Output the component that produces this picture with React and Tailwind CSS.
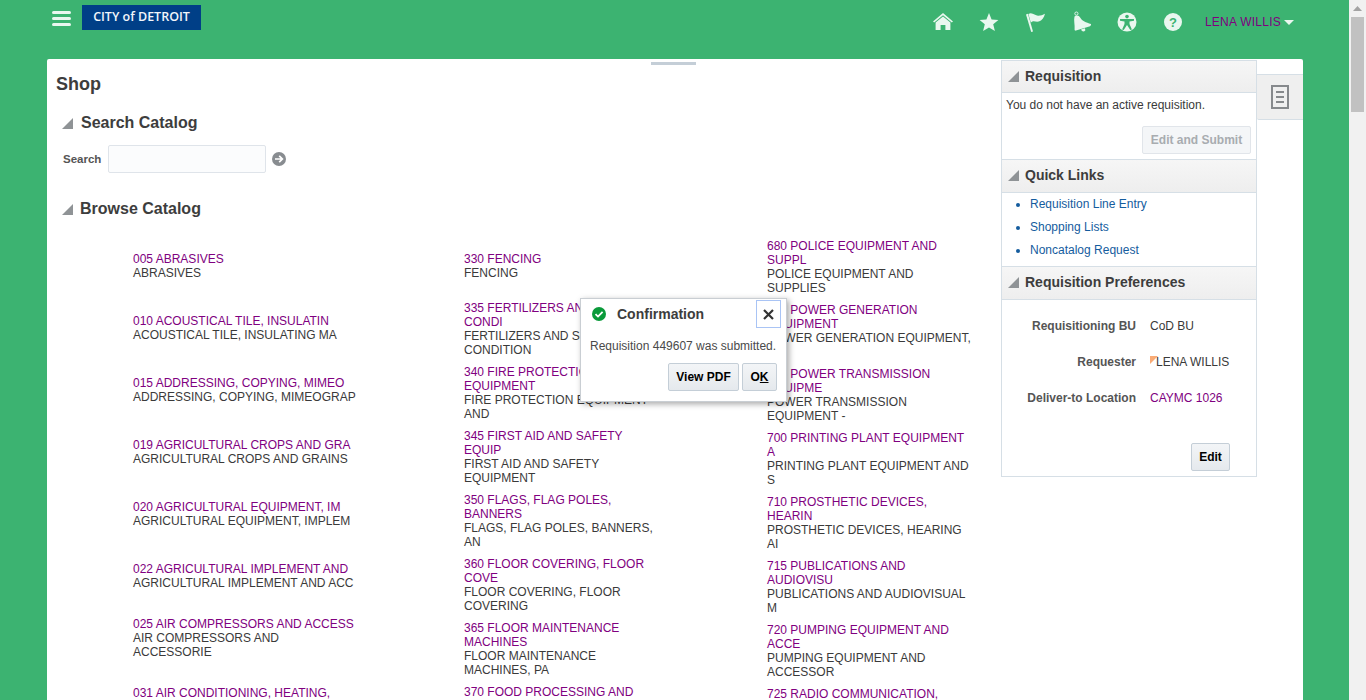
import React from "react";

const col1 = [
  ["005 ABRASIVES", "ABRASIVES"],
  ["010 ACOUSTICAL TILE, INSULATIN", "ACOUSTICAL TILE, INSULATING MA"],
  ["015 ADDRESSING, COPYING, MIMEO", "ADDRESSING, COPYING, MIMEOGRAP"],
  ["019 AGRICULTURAL CROPS AND GRA", "AGRICULTURAL CROPS AND GRAINS"],
  ["020 AGRICULTURAL EQUIPMENT, IM", "AGRICULTURAL EQUIPMENT, IMPLEM"],
  ["022 AGRICULTURAL IMPLEMENT AND", "AGRICULTURAL IMPLEMENT AND ACC"],
  ["025 AIR COMPRESSORS AND ACCESS", "AIR COMPRESSORS AND ACCESSORIE"],
  ["031 AIR CONDITIONING, HEATING,", "AIR CONDITIONING, HEATING"],
];

const col2 = [
  ["330 FENCING", "FENCING"],
  ["335 FERTILIZERS AND SOIL CONDI", "FERTILIZERS AND SOIL CONDITION"],
  ["340 FIRE PROTECTION EQUIPMENT", "FIRE PROTECTION EQUIPMENT AND"],
  ["345 FIRST AID AND SAFETY EQUIP", "FIRST AID AND SAFETY EQUIPMENT"],
  ["350 FLAGS, FLAG POLES, BANNERS", "FLAGS, FLAG POLES, BANNERS, AN"],
  ["360 FLOOR COVERING, FLOOR COVE", "FLOOR COVERING, FLOOR COVERING"],
  ["365 FLOOR MAINTENANCE MACHINES", "FLOOR MAINTENANCE MACHINES, PA"],
  ["370 FOOD PROCESSING AND PREPAR", "FOOD PROCESSING AND PREPARATION"],
];

const col3 = [
  ["680 POLICE EQUIPMENT AND SUPPL", "POLICE EQUIPMENT AND SUPPLIES"],
  ["690 POWER GENERATION EQUIPMENT", "POWER GENERATION EQUIPMENT, A"],
  ["695 POWER TRANSMISSION EQUIPME", "POWER TRANSMISSION EQUIPMENT -"],
  ["700 PRINTING PLANT EQUIPMENT A", "PRINTING PLANT EQUIPMENT AND S"],
  ["710 PROSTHETIC DEVICES, HEARIN", "PROSTHETIC DEVICES, HEARING AI"],
  ["715 PUBLICATIONS AND AUDIOVISU", "PUBLICATIONS AND AUDIOVISUAL M"],
  ["720 PUMPING EQUIPMENT AND ACCE", "PUMPING EQUIPMENT AND ACCESSOR"],
  ["725 RADIO COMMUNICATION, TELEC", "RADIO COMMUNICATION, TELEPHONE"],
];

function Collapse() {
  return (
    <svg width="11" height="11" viewBox="0 0 11 11" className="shrink-0">
      <polygon points="11,0 11,11 0,11" fill="#8f9396" />
    </svg>
  );
}

function CatalogColumn({ items, className }) {
  return (
    <div className={className}>
      {items.map(([title, desc]) => (
        <div key={title} className="flex min-h-[62px] items-center py-1 text-[12px] leading-[14px]">
          <div>
            <div className="text-[#800080]">{title}</div>
            <div className="text-[#3a3a3a]">{desc}</div>
          </div>
        </div>
      ))}
    </div>
  );
}

function SectionHeader({ title, className }) {
  return (
    <div className={"flex items-center gap-[6px] border-b border-[#d6dfe6] bg-gradient-to-b from-[#f6f6f6] to-[#eeeeee] pl-[6px] " + className}>
      <Collapse />
      <span className="text-[14px] font-bold text-[#3d3d3d]">{title}</span>
    </div>
  );
}

function TopIcons() {
  return (
    <div className="flex items-center text-[#e9f7ef]">
      <svg width="46" height="22" viewBox="0 0 46 22" fill="currentColor">
        <path d="M23 2 L33 10.4 L31.8 11.6 L23 4.2 L14.2 11.6 L13 10.4 Z" />
        <path d="M15.6 11.6 L23 5.6 L30.4 11.6 V19 H25.4 V14 H20.6 V19 H15.6 Z" />
      </svg>
      <svg width="46" height="22" viewBox="0 0 46 22" fill="currentColor">
        <path d="M23 2 L25.6 8.4 L32.4 8.9 L27.2 13.3 L28.9 20 L23 16.4 L17.1 20 L18.8 13.3 L13.6 8.9 L20.4 8.4 Z" />
      </svg>
      <svg width="46" height="22" viewBox="0 0 46 22" fill="currentColor">
        <path d="M14 3.4 L15.9 2.8 L21 20.4 L19.2 21 Z" />
        <path d="M16.4 3 C20 0.6 23 4.6 26 4.8 C28.4 4.9 30.8 4 33 2.8 C32 6.6 30 9.8 26.8 10.6 C24 11.2 22 9.6 20.4 10.6 L18.8 11.6 Z" />
      </svg>
      <svg width="46" height="22" viewBox="0 0 46 22" fill="currentColor">
        <circle cx="18.4" cy="2.6" r="1.6" fill="none" stroke="currentColor" strokeWidth="0.9" />
        <path d="M16.5 5.5 C18.5 3.8 21 4.4 22.5 7 C24 10 28 11.5 33 13 C33.2 14 32.8 14.8 32 15.2 L18 19.6 C17 19.8 16.4 19 16.6 18 C17 14.5 15.5 9 16.5 5.5 Z" />
        <path d="M23 18.6 C23.6 20.6 26 21.2 27.4 19.2 L26.9 17.2 Z" />
      </svg>
      <svg width="46" height="22" viewBox="0 0 46 22">
        <circle cx="23" cy="11" r="9.5" fill="currentColor" />
        <circle cx="23" cy="5.6" r="1.8" fill="#3cb371" />
        <path d="M16 8 L30 8 L30 9.8 L25.5 10.6 L25.5 13 L27.9 18.4 L26.3 19 L23 14 L19.7 19 L18.1 18.4 L20.5 13 L20.5 10.6 L16 9.8 Z" fill="#3cb371" />
      </svg>
      <div className="flex w-[46px] justify-center">
        <div className="flex h-[18px] w-[18px] items-center justify-center rounded-full bg-[#e9f7ef] text-[13px] leading-none font-bold text-[#3cb371]">?</div>
      </div>
    </div>
  );
}

export default function App() {
  return (
    <div className="relative flex h-[700px] overflow-hidden bg-[#3cb371] font-['Liberation_Sans',Arial,sans-serif]">
      <div className="min-w-0 flex-1">
        {/* header */}
        <div className="flex h-[59px] items-start pl-[52px]">
          <div className="mt-[11px] flex w-[19px] flex-col gap-[3px]">
            <div className="h-[3px] rounded-full bg-[#e9f7ef]"></div>
            <div className="h-[3px] rounded-full bg-[#e9f7ef]"></div>
            <div className="h-[3px] rounded-full bg-[#e9f7ef]"></div>
          </div>
          <div className="mt-[5px] ml-[11px] flex h-[25px] w-[119px] items-center justify-center bg-[#003f87] font-['Open_Sans',sans-serif] text-[12.5px] font-semibold text-[#f2f6fb]">
            CITY of DETROIT
          </div>
          <div className="mt-[11px] ml-auto flex items-center pr-[55px]">
            <TopIcons />
            <span className="ml-[9px] text-[12px] tracking-[0.25px] text-[#800080]">LENA WILLIS</span>
            <svg width="10" height="5" viewBox="0 0 10 5" className="ml-[3px]">
              <polygon points="0,0 10,0 5,5" fill="#e9f7ef" />
            </svg>
          </div>
        </div>

        {/* white panel */}
        <div className="relative mr-[46px] ml-[47px] flex h-[641px] rounded-t-[2px] bg-white">
          <div className="absolute top-[3px] left-[604px] h-[3px] w-[45px] bg-[#c4ced7]"></div>

          <div className="min-w-0 flex-1">
            <h1 className="pt-[15px] pl-[9px] text-[18px] leading-[20px] font-bold text-[#3d3d3d]">Shop</h1>

            <div className="mt-[18px] flex h-[22px] items-center gap-[8px] pl-[15px]">
              <Collapse />
              <h2 className="text-[16px] font-bold text-[#3d3d3d]">Search Catalog</h2>
            </div>
            <div className="mt-[11px] flex h-[28px] items-center pl-[16px]">
              <span className="pt-[2px] text-[11.5px] font-bold text-[#555555]">Search</span>
              <input className="ml-[7px] h-[28px] w-[158px] rounded-[2px] border border-[#dfe4ea] bg-[#fbfcfd]" />
              <svg width="14" height="14" viewBox="0 0 14 14" className="ml-[6px]">
                <circle cx="7" cy="7" r="7" fill="#888c90" />
                <path d="M3 7 H10 M7.2 3.8 L10.4 7 L7.2 10.2" fill="none" stroke="#ffffff" strokeWidth="1.7" />
              </svg>
            </div>

            <div className="mt-[25px] flex h-[22px] items-center gap-[7px] pl-[15px]">
              <Collapse />
              <h2 className="text-[16px] font-bold text-[#3d3d3d]">Browse Catalog</h2>
            </div>

            <div className="mt-[15px] flex pl-[86px]">
              <CatalogColumn items={col1} className="mr-[107px] w-[224px] shrink-0" />
              <CatalogColumn items={col2} className="mr-[113px] w-[190px] shrink-0" />
              <CatalogColumn items={col3} className="w-[205px] shrink-0" />
            </div>
          </div>

          {/* requisition sidebar */}
          <div className="mt-px h-[417px] w-[256px] shrink-0 border border-t-0 border-[#d6dfe6] bg-white">
            <SectionHeader title="Requisition" className="h-[33px] border-t" />
            <div className="flex flex-col pt-[5px] pb-[5px]">
              <div className="pl-[4px] text-[12px] leading-[14px] text-[#3a3a3a]">You do not have an active requisition.</div>
              <button className="mt-[14px] mr-[5px] h-[28px] w-[109px] self-end rounded-[2px] border border-[#e1e5ea] bg-[#f4f6f8] text-[12px] font-bold text-[#a8acb0]">
                Edit and Submit
              </button>
            </div>
            <SectionHeader title="Quick Links" className="h-[34px] border-t pb-px" />
            <ul className="flex list-disc flex-col gap-[9px] pt-[4px] pb-[9px] pl-[28px] text-[12px] leading-[14px] text-[#145c9e]">
              <li>Requisition Line Entry</li>
              <li>Shopping Lists</li>
              <li>Noncatalog Request</li>
            </ul>
            <SectionHeader title="Requisition Preferences" className="h-[34px] border-t pb-px" />
            <div className="flex flex-col pt-[19px]">
              <div className="flex flex-col gap-[22px] text-[12px] leading-[14px]">
                <div className="flex gap-[14px]">
                  <div className="w-[134px] text-right font-bold text-[#555555]">Requisitioning BU</div>
                  <div className="text-[#3a3a3a]">CoD BU</div>
                </div>
                <div className="flex gap-[14px]">
                  <div className="w-[134px] text-right font-bold text-[#555555]">Requester</div>
                  <div className="flex items-start text-[#3a3a3a]">
                    <svg width="8" height="8" viewBox="0 0 8 8" className="mt-px">
                      <polygon points="0,0 8,0 0,8" fill="#f9ab76" />
                    </svg>
                    <span className="-ml-[2px]">LENA WILLIS</span>
                  </div>
                </div>
                <div className="flex gap-[14px]">
                  <div className="w-[134px] text-right font-bold text-[#555555]">Deliver-to Location</div>
                  <div className="text-[#800080]">CAYMC 1026</div>
                </div>
              </div>
              <button className="mt-[38px] mr-[26px] h-[28px] w-[39px] self-end rounded-[2px] border border-[#c4ced7] bg-gradient-to-b from-[#f3f5f7] to-[#e5e9ed] text-[12px] font-bold text-black">
                Edit
              </button>
            </div>
          </div>

          {/* side tab */}
          <div className="mt-[15px] flex h-[46px] w-[46px] shrink-0 items-center justify-center rounded-bl-[2px] border-y border-[#d6dfe6] bg-[#efefef]">
            <svg width="18" height="24" viewBox="0 0 18 24">
              <rect x="1" y="1" width="16" height="22" fill="none" stroke="#86898c" strokeWidth="2" />
              <path d="M5 7 H13 M5 12 H13 M5 17 H13" stroke="#86898c" strokeWidth="2" />
            </svg>
          </div>
        </div>
      </div>

      {/* page scrollbar */}
      <div className="flex w-[17px] shrink-0 flex-col bg-[#f1f1f1]">
        <div className="flex h-[17px] items-center justify-center">
          <svg width="9" height="5" viewBox="0 0 9 5">
            <polygon points="0,5 9,5 4.5,0" fill="#a3a3a3" />
          </svg>
        </div>
        <div className="ml-[2px] h-[95px] w-[13px] bg-[#c1c1c1]"></div>
      </div>

      {/* confirmation dialog */}
      <div className="absolute top-[298px] left-[580px] h-[104px] w-[207px] border border-[#c9ced3] bg-white shadow-[2px_2px_6px_rgba(0,0,0,0.35)]">
        <div className="flex h-[30px] items-start">
          <svg width="14" height="14" viewBox="0 0 14 14" className="mt-[8px] ml-[11px] shrink-0">
            <circle cx="7" cy="7" r="7" fill="#0a9a3a" />
            <path d="M3.5 7.2 L6 9.6 L10.6 4.8" fill="none" stroke="#ffffff" strokeWidth="1.8" />
          </svg>
          <span className="mt-[7px] ml-[11px] text-[14px] leading-[16px] font-bold text-[#3d3d3d]">Confirmation</span>
          <div className="mt-px mr-[5px] ml-auto flex h-[28px] w-[25px] items-center justify-center border border-[#a9c4f5]">
            <svg width="11" height="11" viewBox="0 0 11 11">
              <path d="M1 1 L10 10 M10 1 L1 10" stroke="#333333" strokeWidth="2.2" />
            </svg>
          </div>
        </div>
        <div className="mt-[10px] pl-[9px] text-[12px] leading-[14px] text-[#4a4a4a]">Requisition 449607 was submitted.</div>
        <div className="mt-[10px] flex justify-end gap-[3px] pr-[9px]">
          <button className="h-[28px] w-[71px] rounded-[2px] border border-[#c4ced7] bg-gradient-to-b from-[#f3f5f7] to-[#e5e9ed] text-[12px] font-bold text-black">
            View PDF
          </button>
          <button className="h-[28px] w-[35px] rounded-[2px] border border-[#c4ced7] bg-gradient-to-b from-[#f3f5f7] to-[#e5e9ed] text-[12px] font-bold text-black">
            O<span className="underline">K</span>
          </button>
        </div>
      </div>
    </div>
  );
}
